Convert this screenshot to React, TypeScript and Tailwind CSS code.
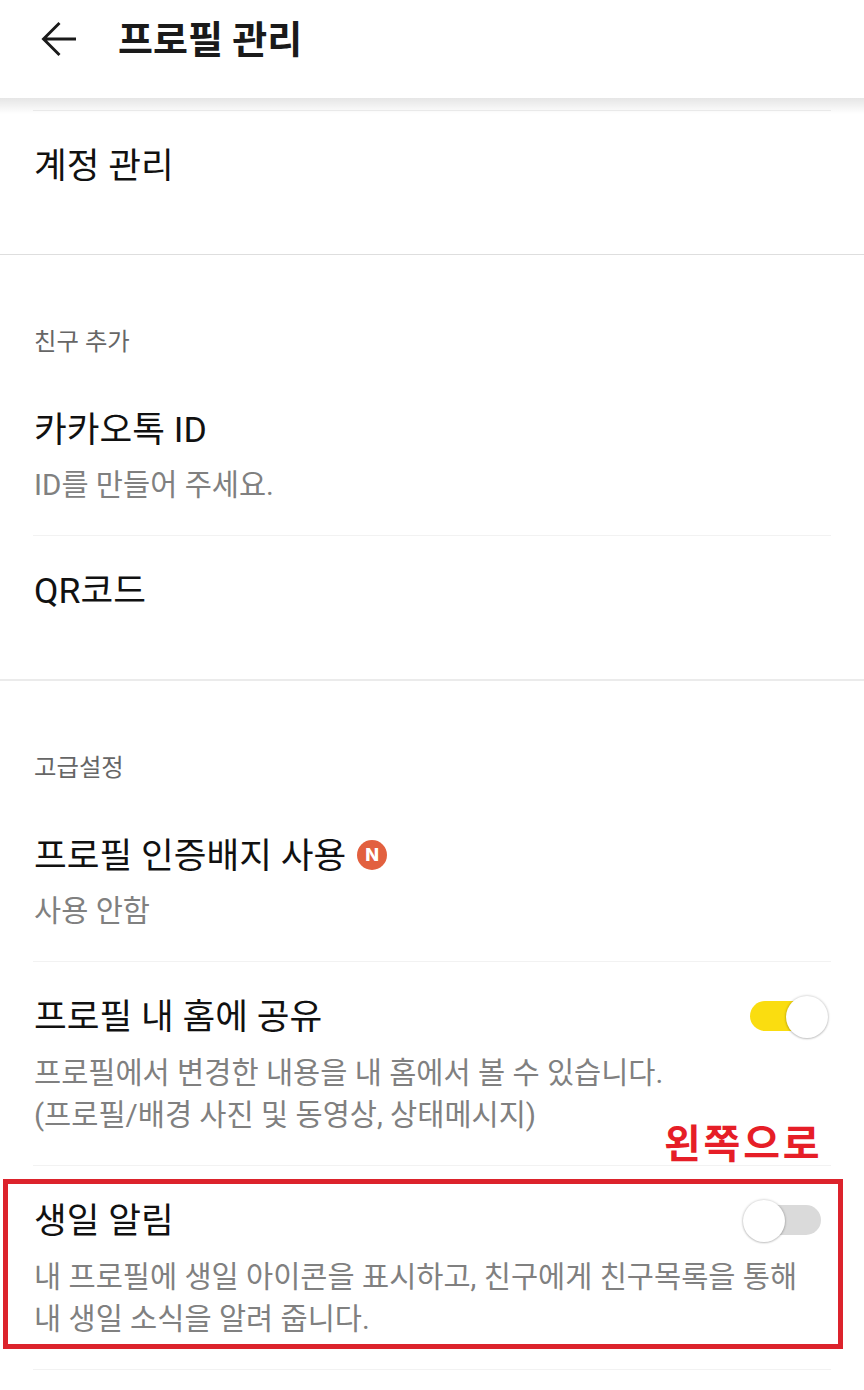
import { ReactNode, useState } from 'react'
import clsx from 'clsx'

type RowProps = {
  title: string
  badge?: ReactNode
  action?: ReactNode
  lines?: string[]
  last?: boolean
  children?: ReactNode
}

function BackArrow() {
  return (
    <svg width="36" height="36" viewBox="0 0 36 36" fill="none" stroke="#1a1a1a" strokeWidth="2.9">
      <path d="M35 18H3M18.5 2L2.5 18l16 16" />
    </svg>
  )
}

function NewBadge() {
  return (
    <span className="mb-px ml-[11px] flex size-[30px] items-center justify-center rounded-full bg-[#e2603f] font-[Inter,sans-serif] text-[18px] leading-none font-extrabold text-white">
      N
    </span>
  )
}

function Toggle({ defaultOn, label }: { defaultOn: boolean; label: string }) {
  const [on, setOn] = useState(defaultOn)

  return (
    <button
      role="switch"
      aria-checked={on}
      aria-label={label}
      onClick={() => setOn(!on)}
      className="relative flex h-11 w-[87px] items-center justify-center"
    >
      <span className={clsx('h-[30px] w-[71px] rounded-full', on ? 'bg-[#fadd10]' : 'bg-[#dadada]')} />
      <span
        className={clsx(
          'absolute top-[1.5px] size-[42px] rounded-full bg-white shadow-[0_0_2px_1px_rgba(0,0,0,0.13),0_1px_2px_rgba(0,0,0,0.15)]',
          on ? 'right-px' : 'left-px',
        )}
      />
    </button>
  )
}

function SectionLabel({ children }: { children: ReactNode }) {
  return <h2 className="px-[34px] pt-[72px] pb-[18px] text-[24.4px] leading-[30px] text-[#666]">{children}</h2>
}

function Row({ title, badge, action, lines = [], last, children }: RowProps) {
  return (
    <div
      className={clsx(
        'relative mx-[33px] pt-8',
        last ? 'pb-[67px]' : 'border-b border-[#f2f2f2]',
        !last && (lines.length > 1 ? 'pb-[29px]' : 'pb-[29px]'),
      )}
    >
      <div className="flex h-11 items-center pr-0.5 pl-px">
        <h3 className="pt-px text-[35.6px] leading-[44px] whitespace-nowrap text-[#111]">{title}</h3>
        {badge}
        {action && <div className="ml-auto">{action}</div>}
      </div>
      {lines.length > 0 && (
        <p
          className={clsx(
            'pl-px text-[29.53px] leading-[42px] whitespace-nowrap text-[#808080]',
            lines.length > 1 ? 'mt-[14px]' : 'mt-[13px]',
          )}
        >
          {lines.map((line) => (
            <span key={line} className="block">{line}</span>
          ))}
        </p>
      )}
      {children}
    </div>
  )
}

export default function App() {
  return (
    <div className="h-[1390px] w-[864px] overflow-hidden bg-white font-[Roboto,'Noto_Sans_CJK_KR',sans-serif]">
      <header className="relative flex h-[98px] items-start bg-white pl-[41px]">
        <div className="mt-[21px]"><BackArrow /></div>
        <h1 className="mt-[17px] ml-[41px] text-[38px] leading-[46px] font-bold text-[#1a1a1a]">프로필 관리</h1>
        <div className="pointer-events-none absolute inset-x-0 top-full h-4 bg-linear-to-b from-black/10 to-transparent" />
      </header>

      <section className="border-b border-[#dedede]">
        <div className="mx-[33px] mt-3 border-t border-[#eee]" />
        <Row title="계정 관리" last />
      </section>

      <section className="border-b-2 border-[#ebebeb]">
        <SectionLabel>친구 추가</SectionLabel>
        <Row title="카카오톡 ID" lines={['ID를 만들어 주세요.']} />
        <Row title="QR코드" last />
      </section>

      <section>
        <SectionLabel>고급설정</SectionLabel>
        <Row title="프로필 인증배지 사용" badge={<NewBadge />} lines={['사용 안함']} />
        <Row
          title="프로필 내 홈에 공유"
          action={<Toggle defaultOn label="프로필 내 홈에 공유" />}
          lines={['프로필에서 변경한 내용을 내 홈에서 볼 수 있습니다.', '(프로필/배경 사진 및 동영상, 상태메시지)']}
        />
        <Row
          title="생일 알림"
          action={<Toggle defaultOn={false} label="생일 알림" />}
          lines={['내 프로필에 생일 아이콘을 표시하고, 친구에게 친구목록을 통해', '내 생일 소식을 알려 줍니다.']}
        >
          {/* hint drawn over the row */}
          <div className="pointer-events-none absolute top-[13px] -left-[30px] h-[170px] w-[840px] border-5 border-[#dc232c]" />
          <div className="pointer-events-none absolute -top-[46px] left-[631px] text-[40px] leading-[50px] font-bold tracking-[2.8px] whitespace-nowrap text-[#e61e27]">
            왼쪽으로
          </div>
        </Row>
      </section>
    </div>
  )
}
